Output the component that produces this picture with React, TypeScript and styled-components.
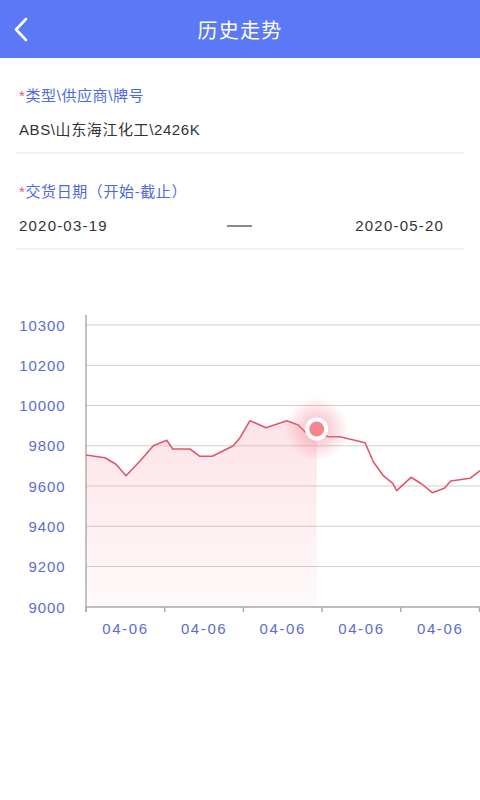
import React from "react";
import styled, { createGlobalStyle } from "styled-components";

const Global = createGlobalStyle`
  html, body { margin: 0; padding: 0; background: #fff; }
  body { font-family: "Liberation Sans", "Noto Sans CJK SC", sans-serif; }
  * { box-sizing: border-box; }
`;

const Page = styled.div`
  width: 480px;
  min-height: 800px;
  background: #fff;
  display: flex;
  flex-direction: column;
`;

const Header = styled.header`
  height: 58px;
  background: #5b78f7;
  display: flex;
  align-items: center;
  justify-content: center;
  position: relative;
`;

const BackButton = styled.button`
  position: absolute;
  left: 8px;
  top: 14px;
  width: 26px;
  height: 32px;
  padding: 0;
  border: 0;
  background: transparent;
  display: flex;
  align-items: center;
  justify-content: center;
`;

const Title = styled.h1`
  margin: 0;
  color: #fff;
  font-size: 20px;
  font-weight: 400;
  letter-spacing: 1.2px;
  font-family: "Noto Sans CJK SC", sans-serif;
`;

const Form = styled.div`
  padding: 0 16px;
  display: flex;
  flex-direction: column;
`;

const Field = styled.div<{ $top: number }>`
  padding-top: ${(p) => p.$top}px;
  display: flex;
  flex-direction: column;
`;

const Label = styled.div`
  height: 20px;
  line-height: 20px;
  padding-left: 3px;
  font-size: 15px;
  color: #4c69e6;
  letter-spacing: 0.6px;
  font-family: "Liberation Sans", "Noto Sans CJK SC", sans-serif;
`;

const Star = styled.span`
  color: #f0566a;
`;

const Value = styled.div<{ $right?: number }>`
  margin-top: 14px;
  height: 20px;
  line-height: 20px;
  padding: 0 ${(p) => p.$right ?? 3}px 0 3px;
  font-size: 15px;
  color: #333;
  letter-spacing: 0.6px;
  display: flex;
  align-items: center;
  justify-content: space-between;
`;

const DateText = styled.span`
  letter-spacing: 1.2px;
`;

const Dash = styled.span`
  width: 25px;
  height: 2.5px;
  background: #8a8a8a;
  margin-left: 16px;
`;

const Divider = styled.div`
  margin-top: 12px;
  height: 2px;
  background: #f1f1f1;
`;

const ChartSvg = styled.svg`
  display: block;
  margin-top: 40px;
`;

const YLabel = styled.text`
  font-family: "Liberation Sans", sans-serif;
  font-size: 15px;
  fill: #5a6dd6;
  letter-spacing: 0.9px;
`;

const XLabel = styled.text`
  font-family: "Liberation Sans", sans-serif;
  font-size: 15px;
  fill: #5a6dd6;
  letter-spacing: 1.6px;
`;

const yTicks = [
  { v: "10300", y: 325 },
  { v: "10200", y: 365.3 },
  { v: "10000", y: 405.5 },
  { v: "9800", y: 445.8 },
  { v: "9600", y: 486 },
  { v: "9400", y: 526.3 },
  { v: "9200", y: 566.5 },
  { v: "9000", y: 607 },
];

const xTicks = [86, 164.8, 243.4, 322, 400.8, 479.5];

const pts: [number, number][] = [
  [86, 455], [105, 457.7], [116, 464.3], [126, 475.7], [140, 461],
  [153.3, 445.7], [166.7, 440.3], [172.7, 449], [190, 449], [200, 456.3],
  [212.3, 456.3], [233.3, 445.7], [240, 437.7], [250, 420.7], [266, 427.7],
  [286.7, 420.7], [298.3, 425], [305, 431.7], [316.7, 432], [328.3, 436.7],
  [340, 436.7], [365, 442.7], [373.3, 461.7], [383.3, 475.7], [392.7, 483.3],
  [396.7, 490.7], [411, 477.3], [421.7, 484], [432.3, 492.7], [444.3, 488.3],
  [450.7, 481], [470, 478.3], [480, 470.7],
];

const MARK_X = 316.7;
const MARK_Y = 429;

function Chart() {
  const line = pts.map((p, i) => `${i ? "L" : "M"}${p[0]},${p[1]}`).join(" ");
  const areaPts = pts.filter((p) => p[0] <= MARK_X);
  const area =
    areaPts.map((p, i) => `${i ? "L" : "M"}${p[0]},${p[1]}`).join(" ") +
    ` L${MARK_X},607 L86,607 Z`;
  return (
    <ChartSvg width="480" height="360" viewBox="0 290 480 360">
      <defs>
        <linearGradient id="areaGrad" x1="0" y1="0" x2="0" y2="1">
          <stop offset="0" stopColor="#f7a3b0" stopOpacity="0.3" />
          <stop offset="1" stopColor="#f7a3b0" stopOpacity="0.06" />
        </linearGradient>
        <radialGradient id="glow" cx="0.5" cy="0.5" r="0.5">
          <stop offset="0.3" stopColor="#f47a8c" stopOpacity="0.4" />
          <stop offset="1" stopColor="#f47a8c" stopOpacity="0" />
        </radialGradient>
      </defs>
      {yTicks.slice(0, 7).map((t) => (
        <line key={t.v} x1="86" x2="480" y1={t.y} y2={t.y} stroke="#cfcfcf" strokeWidth="1" />
      ))}
      <path d={area} fill="url(#areaGrad)" />
      <line x1="86" x2="86" y1="315" y2="612" stroke="#a9a9a9" strokeWidth="1.4" />
      <line x1="86" x2="480" y1="607" y2="607" stroke="#a9a9a9" strokeWidth="1.4" />
      {xTicks.map((x) => (
        <line key={x} x1={x} x2={x} y1="607" y2="612" stroke="#a9a9a9" strokeWidth="1.4" />
      ))}
      {yTicks.map((t) => (
        <YLabel key={t.v} x="65.5" y={t.y} textAnchor="end" dominantBaseline="central">
          {t.v}
        </YLabel>
      ))}
      {xTicks.slice(0, 5).map((x, i) => (
        <XLabel key={x} x={(x + xTicks[i + 1]) / 2} y="628" textAnchor="middle" dominantBaseline="central">
          04-06
        </XLabel>
      ))}
      <path d={line} fill="none" stroke="#e2566a" strokeWidth="1.6" strokeLinejoin="round" />
      <circle cx={MARK_X} cy={MARK_Y} r="32" fill="url(#glow)" />
      <circle cx={MARK_X} cy={MARK_Y} r="11.5" fill="#fff" />
      <circle cx={MARK_X} cy={MARK_Y} r="7.5" fill="#f5858f" />
    </ChartSvg>
  );
}

export default function App() {
  return (
    <Page>
      <Global />
      <Header>
        <BackButton aria-label="back">
          <svg width="16" height="26" viewBox="0 0 16 26">
            <path d="M13 2 L3 12.5 L13 23" fill="none" stroke="#fff" strokeWidth="2.6" strokeLinecap="round" strokeLinejoin="round" />
          </svg>
        </BackButton>
        <Title>历史走势</Title>
      </Header>
      <Form>
        <Field $top={28}>
          <Label>
            <Star>*</Star>类型\供应商\牌号
          </Label>
          <Value>ABS\山东海江化工\2426K</Value>
          <Divider />
        </Field>
        <Field $top={28}>
          <Label>
            <Star>*</Star>交货日期（开始-截止）
          </Label>
          <Value $right={20}>
            <DateText>2020-03-19</DateText>
            <Dash />
            <DateText>2020-05-20</DateText>
          </Value>
          <Divider />
        </Field>
      </Form>
      <Chart />
    </Page>
  );
}
